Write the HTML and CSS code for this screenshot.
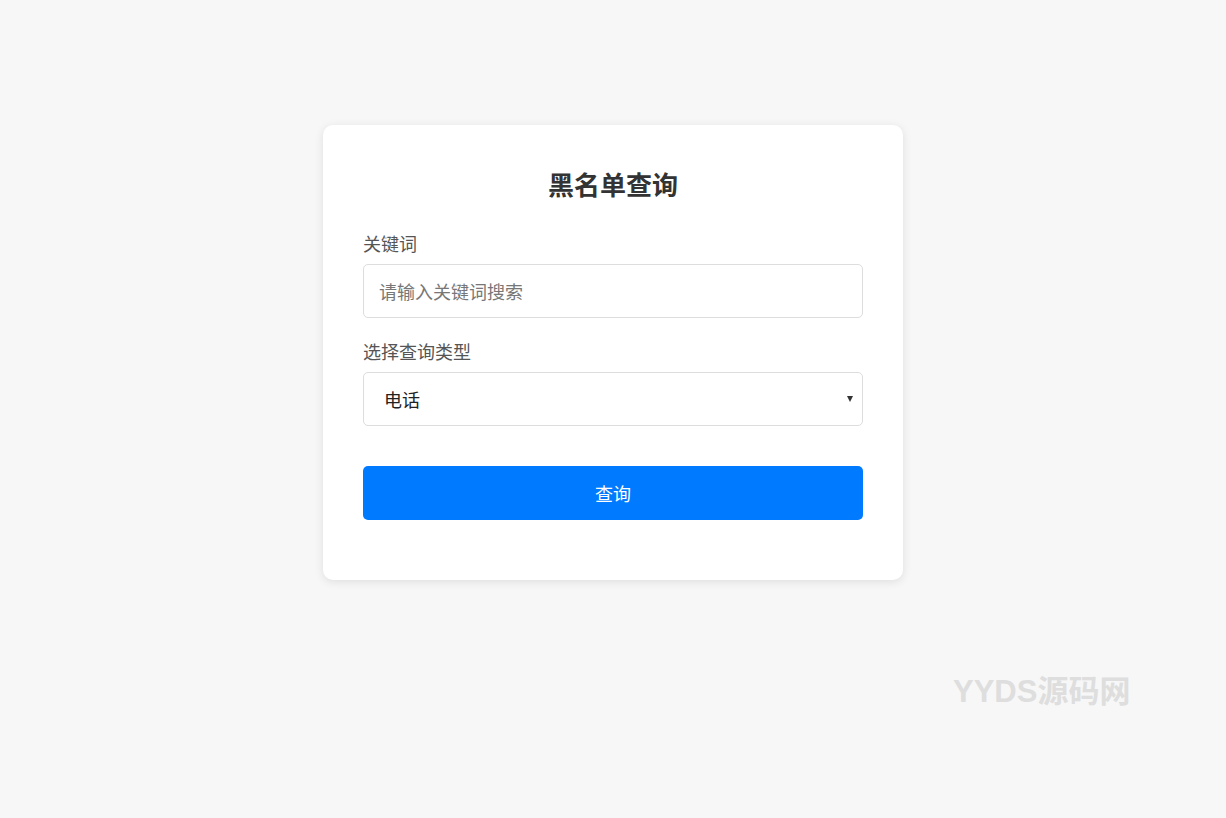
FILE: index.html
```html
<!DOCTYPE html>
<html lang="zh-CN">
<head>
<meta charset="utf-8">
<title>黑名单查询</title>
<link rel="stylesheet" href="styles.css">
</head>
<body>
<div class="card">
  <h2 class="title">黑名单查询</h2>
  <div class="form">
    <div class="group">
      <label class="label" for="kw">关键词</label>
      <input class="field" id="kw" type="text" placeholder="请输入关键词搜索">
    </div>
    <div class="group">
      <label class="label" for="type">选择查询类型</label>
      <div class="select-wrap">
        <select class="field select" id="type">
          <option>电话</option>
          <option>QQ</option>
          <option>微信</option>
        </select>
      </div>
    </div>
    <button class="btn" type="button">查询</button>
  </div>
</div>
<div class="watermark">YYDS源码网</div>
</body>
</html>
```
FILE: styles.css
```css
html, body {
  margin: 0;
  padding: 0;
}
body {
  background: #f7f7f7;
  font-family: "Noto Sans CJK SC", "Noto Sans", "Liberation Sans", sans-serif;
  padding-top: 125px;
  min-height: 818px;
  box-sizing: border-box;
  position: relative;
}
.card {
  width: 580px;
  box-sizing: border-box;
  margin: 0 auto;
  background: #fff;
  border-radius: 10px;
  box-shadow: 0 2px 10px rgba(0, 0, 0, 0.1);
  padding: 40px 40px 60px;
}
.title {
  margin: 0 0 28px;
  font-size: 26px;
  line-height: 37px;
  font-weight: bold;
  color: #333;
  text-align: center;
}
.form {
  display: flex;
  flex-direction: column;
  gap: 20px;
}
.group {
  display: flex;
  flex-direction: column;
}
.label {
  font-size: 18px;
  line-height: 27px;
  color: #555;
  margin-bottom: 7px;
}
.field {
  box-sizing: border-box;
  width: 100%;
  height: 54px;
  border: 1px solid #ddd;
  border-radius: 5px;
  padding: 0 15px;
  font-size: 18px;
  font-family: inherit;
  color: #222;
  background: #fff;
  outline: none;
}
.field::placeholder {
  color: #777;
}
.select-wrap {
  position: relative;
}
.select {
  -webkit-appearance: none;
  appearance: none;
  padding-left: 20px;
}
.select-wrap::after {
  content: "";
  position: absolute;
  right: 10px;
  top: 24px;
  width: 0;
  height: 0;
  border-left: 3.5px solid transparent;
  border-right: 3.5px solid transparent;
  border-top: 6px solid #333;
  pointer-events: none;
}
.btn {
  margin-top: 20px;
  height: 54px;
  border: none;
  border-radius: 5px;
  background: #007bff;
  color: #fff;
  font-size: 18px;
  font-family: inherit;
  cursor: pointer;
}
.watermark {
  position: absolute;
  left: 953px;
  top: 672px;
  font-size: 31px;
  line-height: 40px;
  font-weight: bold;
  color: #dedede;
  font-family: "Liberation Sans", "Noto Sans CJK SC", sans-serif;
}
```
